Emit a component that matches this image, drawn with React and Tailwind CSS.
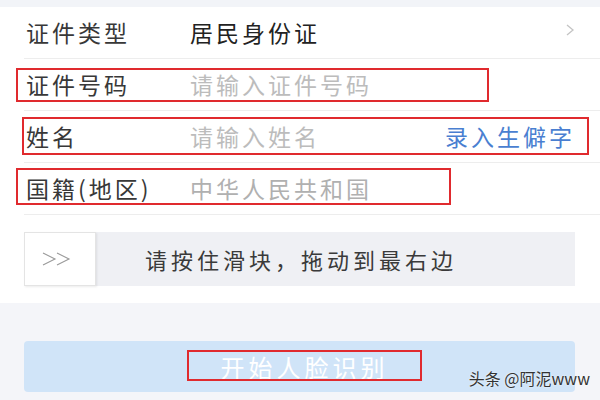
import React from "react";

const font = { fontFamily: '"Noto Sans CJK SC", "Noto Sans", sans-serif' };

// red annotation box drawn over a row
const Mark = ({ className }) => (
  <div className={`absolute border-2 border-[#e02a2e] pointer-events-none ${className}`} />
);

const Row = ({ label, children, right, mark }) => (
  <div className="relative h-[52px] ml-6 border-b border-[#ededed] flex items-center">
    <span className="w-[166px] pl-[2px] text-[23px] tracking-[3px] text-[#383838]">{label}</span>
    <div className="flex-1 text-[23px] tracking-[3px]">{children}</div>
    {right}
    {mark}
  </div>
);

export default function App() {
  return (
    <div className="w-[600px] h-[400px] bg-[#f4f5f9] overflow-hidden relative" style={font}>
      <div className="h-[7px] bg-[#f2f4f8]" />

      {/* form panel */}
      <div className="bg-white">
        <Row
          label="证件类型"
          right={
            <svg width="10" height="14" viewBox="0 0 10 14" className="mr-[25px] -mt-[6px]">
              <polyline points="2,2 8,7 2,12" fill="none" stroke="#c4c4c4" strokeWidth="1.3" />
            </svg>
          }
        >
          <span className="text-[#222]">居民身份证</span>
        </Row>
        <Row
          label="证件号码"
          mark={<Mark className="-left-[8px] top-[9px] w-[473px] h-[34px]" />}
        >
          <span className="text-[#bcbcbc]">请输入证件号码</span>
        </Row>
        <Row
          label="姓名"
          right={<span className="mr-[25px] text-[23px] tracking-[3px] text-[#4a7fd1]">录入生僻字</span>}
          mark={<Mark className="-left-[2px] top-[6px] w-[567px] h-[38px]" />}
        >
          <span className="text-[#bcbcbc]">请输入姓名</span>
        </Row>
        <Row
          label="国籍(地区)"
          mark={<Mark className="-left-[8px] top-[5px] w-[435px] h-[37px]" />}
        >
          <span className="text-[#b0b0b0]">中华人民共和国</span>
        </Row>

        {/* slider */}
        <div className="px-6 pt-[17px] pb-[17px]">
          <div className="h-[54px] w-[551px] bg-[#eff0f4] flex items-center">
            <div className="h-full w-[72px] bg-white border border-[#e4e4e4] shadow-[1px_1px_2px_rgba(0,0,0,0.08)] flex items-center justify-center">
              <svg width="30" height="14" viewBox="0 0 30 14" className="-ml-[6px]">
                <polyline points="1,1 13,7 1,13" fill="none" stroke="#9a9a9a" strokeWidth="1.1" />
                <polyline points="15,1 27,7 15,13" fill="none" stroke="#9a9a9a" strokeWidth="1.1" />
              </svg>
            </div>
            <span className="ml-[49px] text-[22px] tracking-[4px] text-[#3a3a3a]">请按住滑块，拖动到最右边</span>
          </div>
        </div>
      </div>

      {/* submit */}
      <div className="px-6 pt-[38px]">
        <div className="relative h-[51px] w-[551px] rounded-[4px] bg-[#d0e4f8] flex items-center justify-center">
          <span className="ml-[10px] text-[24px] tracking-[4px] text-white">开始人脸识别</span>
          <Mark className="left-[163px] top-[9px] w-[235px] h-[31px]" />
        </div>
      </div>

      <div className="absolute right-[10px] bottom-[10px] text-[16px] text-[#333] [text-shadow:0_0_2px_#fff]">
        头条 @阿泥www
      </div>
    </div>
  );
}
